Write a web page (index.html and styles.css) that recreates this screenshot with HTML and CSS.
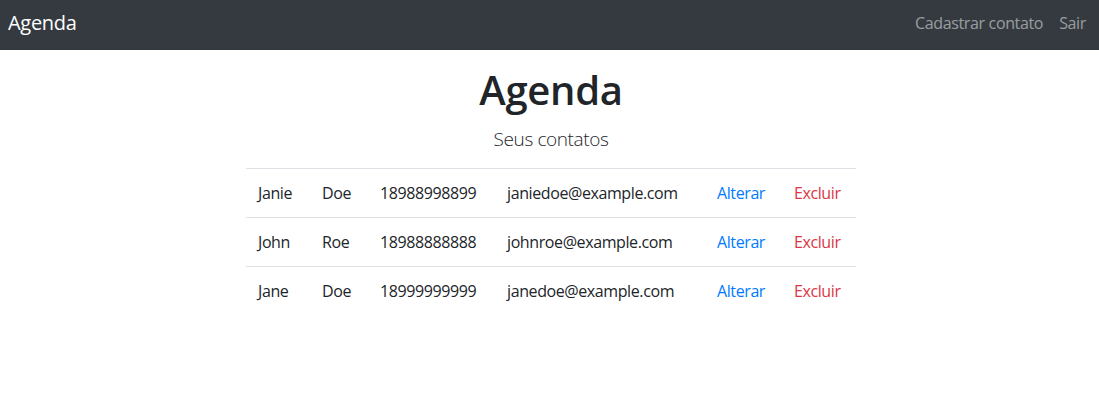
FILE: index.html
```html
<!DOCTYPE html>
<html lang="pt-br">
<head>
<meta charset="utf-8">
<title>Agenda</title>
<link rel="stylesheet" href="styles.css">
</head>
<body>
<nav class="navbar">
  <a class="brand" href="#">Agenda</a>
  <div class="nav-links">
    <a class="nav-link" href="#">Cadastrar contato</a>
    <a class="nav-link" href="#">Sair</a>
  </div>
</nav>
<main class="main">
  <h1 class="title">Agenda</h1>
  <p class="lead">Seus contatos</p>
  <table class="contacts">
    <colgroup>
      <col class="c1"><col class="c2"><col class="c3"><col class="c4"><col class="c5"><col class="c6">
    </colgroup>
    <tbody>
      <tr>
        <td>Janie</td><td>Doe</td><td>18988998899</td><td>janiedoe@example.com</td>
        <td><a class="edit" href="#">Alterar</a></td><td><a class="delete" href="#">Excluir</a></td>
      </tr>
      <tr>
        <td>John</td><td>Roe</td><td>18988888888</td><td>johnroe@example.com</td>
        <td><a class="edit" href="#">Alterar</a></td><td><a class="delete" href="#">Excluir</a></td>
      </tr>
      <tr>
        <td>Jane</td><td>Doe</td><td>18999999999</td><td>janedoe@example.com</td>
        <td><a class="edit" href="#">Alterar</a></td><td><a class="delete" href="#">Excluir</a></td>
      </tr>
    </tbody>
  </table>
</main>
</body>
</html>
```

FILE: styles.css
```css
* { box-sizing: border-box; }
html, body { margin: 0; padding: 0; }
body {
  font-family: "Segoe UI", "Open Sans", "Noto Sans", "Liberation Sans", sans-serif;
  font-size: 16px;
  line-height: 1.5;
  color: #212529;
  background: #fff;
}
a { text-decoration: none; }

.navbar {
  height: 50px;
  background: #343a40;
  display: flex;
  align-items: center;
  justify-content: space-between;
  padding: 0 13px 4px 8px;
}
.brand {
  color: #fff;
  font-size: 20px;
  line-height: 30px;
  letter-spacing: -0.3px;
}
.nav-links {
  display: flex;
  gap: 16px;
}
.nav-link {
  color: rgba(255, 255, 255, 0.5);
  font-size: 16px;
  line-height: 24px;
  letter-spacing: -0.35px;
}

.main {
  padding-left: 3px;
  text-align: center;
}
.title {
  margin: 16px 0 8px;
  font-size: 40px;
  line-height: 48px;
  font-weight: 600;
  letter-spacing: -0.3px;
}
.lead {
  margin: 0 0 14px;
  padding-top: 2px;
  font-size: 19px;
  line-height: 30px;
  font-weight: 300;
  letter-spacing: -0.4px;
}
.contacts {
  margin: 0 auto;
  width: 610px;
  border-collapse: collapse;
  table-layout: fixed;
  text-align: left;
}
.c1 { width: 64px; }
.c2 { width: 58px; }
.c3 { width: 127px; }
.c4 { width: 210px; }
.c5 { width: 77px; }
.c6 { width: 74px; }
.contacts td {
  padding: 12px;
  border-top: 1px solid #dee2e6;
  white-space: nowrap;
  line-height: 24px;
  letter-spacing: -0.4px;
}
.edit { color: #007bff; }
.delete { color: #dc3545; }
```
